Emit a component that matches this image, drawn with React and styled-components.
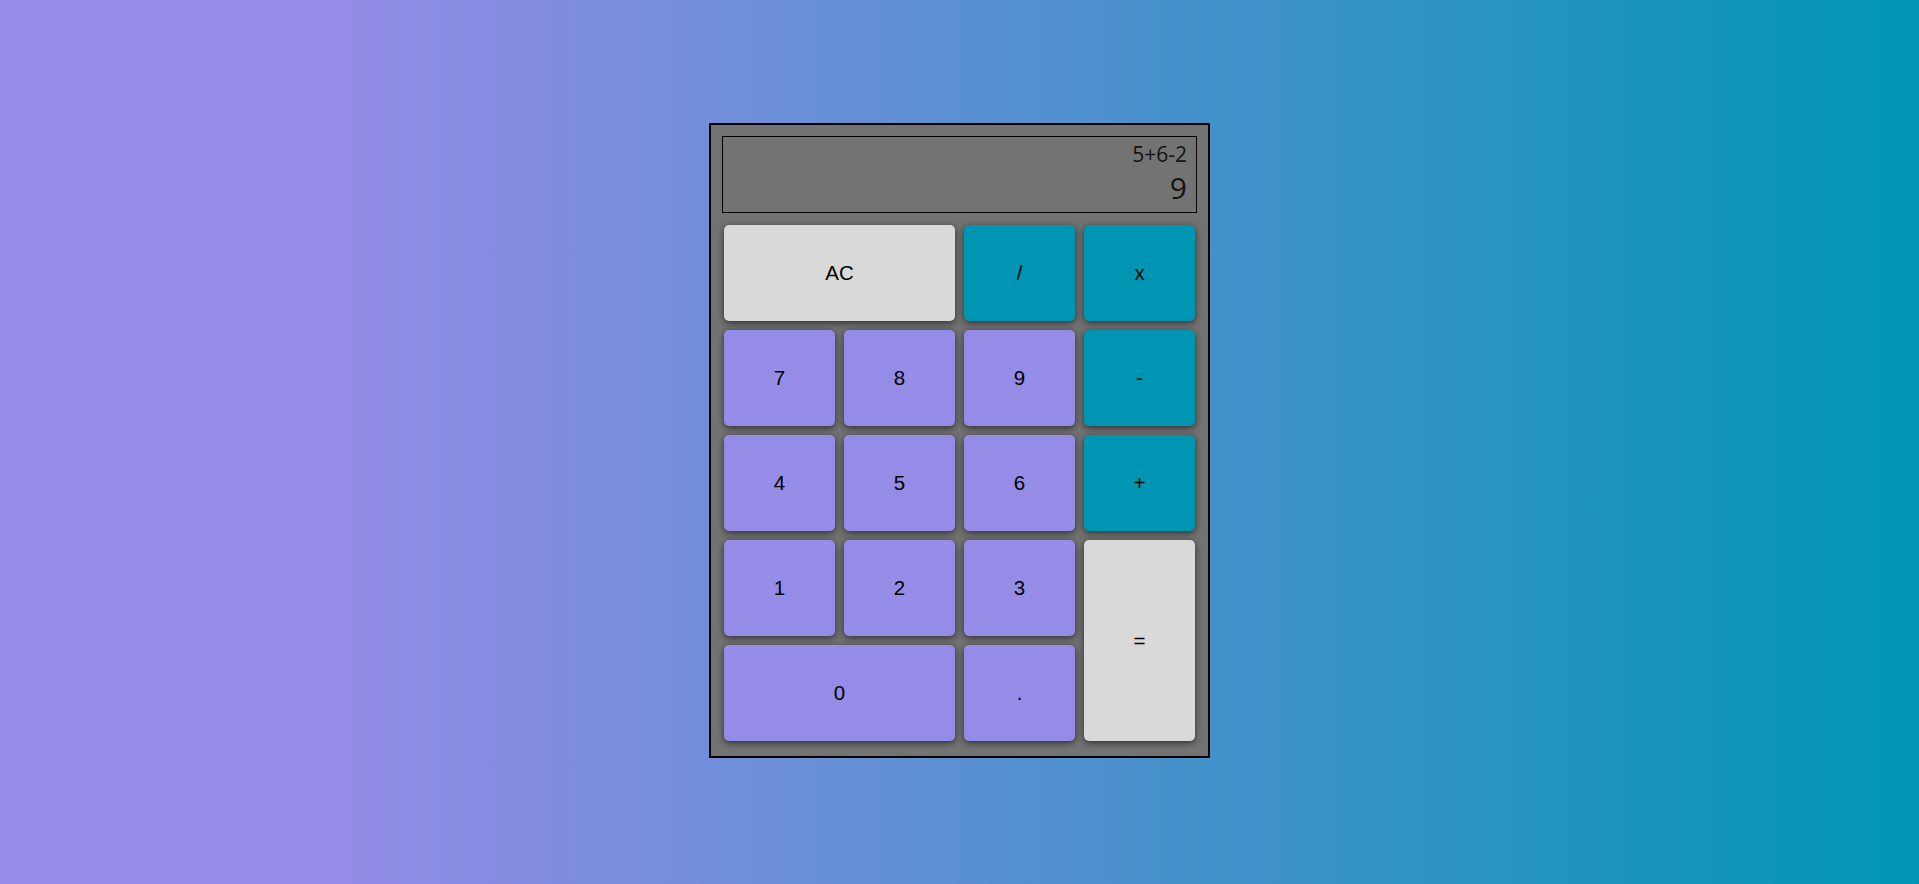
import React, { useState } from 'react';
import styled, { createGlobalStyle } from 'styled-components';

const GlobalStyle = createGlobalStyle`
  html, body {
    margin: 0;
    padding: 0;
    height: 100%;
  }
  body {
    font-family: 'Liberation Sans', Arial, sans-serif;
  }
`;

const Page = styled.div`
  min-height: 884px;
  display: flex;
  justify-content: center;
  align-items: flex-start;
  padding-top: 123px;
  box-sizing: border-box;
  background: linear-gradient(to right, #948ce6 18%, #0096b3 100%);
`;

const Calculator = styled.div`
  width: 501px;
  box-sizing: border-box;
  background-color: #737373;
  border: 2px solid #000;
  padding: 11px 11px 15px;
`;

const Display = styled.div`
  height: 77px;
  box-sizing: border-box;
  border: 1px solid #000;
  padding: 3px 9px 0;
  display: flex;
  flex-direction: column;
  align-items: flex-end;
  font-family: 'Open Sans', 'DejaVu Sans', sans-serif;
  color: #141414;
`;

const Expression = styled.div`
  font-size: 21px;
  line-height: 29px;
`;

const Result = styled.div`
  font-size: 30px;
  line-height: 38px;
`;

const Keypad = styled.div`
  margin-top: 12px;
  padding: 0 2px;
  display: grid;
  grid-template-columns: repeat(4, 111px);
  grid-auto-rows: 96px;
  gap: 9px;
`;

const colors = {
  num: '#948ce6',
  op: '#0096b3',
  light: '#d9d9d9',
};

const Key = styled.button`
  border: none;
  border-radius: 5px;
  background-color: ${(p) => colors[p.$kind]};
  grid-column: span ${(p) => p.$cols || 1};
  grid-row: span ${(p) => p.$rows || 1};
  box-shadow: 0 2px 7px rgba(0, 0, 0, 0.6);
  font-family: 'Liberation Sans', Arial, sans-serif;
  font-size: 20.5px;
  color: #000;
  cursor: pointer;
  padding: 0;
`;

const keys = [
  { label: 'AC', kind: 'light', cols: 2 },
  { label: '/', kind: 'op' },
  { label: 'x', kind: 'op' },
  { label: '7', kind: 'num' },
  { label: '8', kind: 'num' },
  { label: '9', kind: 'num' },
  { label: '-', kind: 'op' },
  { label: '4', kind: 'num' },
  { label: '5', kind: 'num' },
  { label: '6', kind: 'num' },
  { label: '+', kind: 'op' },
  { label: '1', kind: 'num' },
  { label: '2', kind: 'num' },
  { label: '3', kind: 'num' },
  { label: '=', kind: 'light', rows: 2 },
  { label: '0', kind: 'num', cols: 2 },
  { label: '.', kind: 'num' },
];

export default function App() {
  const [expression] = useState('5+6-2');
  const [result] = useState('9');

  return (
    <>
      <GlobalStyle />
      <Page>
        <Calculator>
          <Display>
            <Expression>{expression}</Expression>
            <Result>{result}</Result>
          </Display>
          <Keypad>
            {keys.map((k) => (
              <Key key={k.label} $kind={k.kind} $cols={k.cols} $rows={k.rows}>
                {k.label}
              </Key>
            ))}
          </Keypad>
        </Calculator>
      </Page>
    </>
  );
}
